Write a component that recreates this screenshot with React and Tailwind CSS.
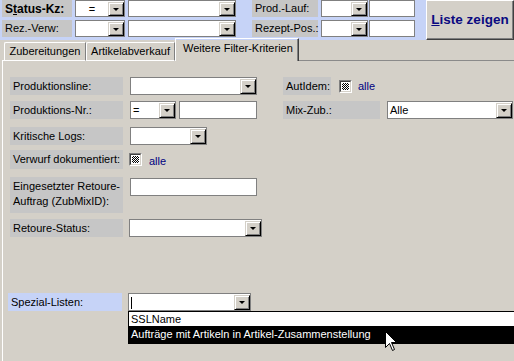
import React from "react";

function DropBtn() {
  return (
    <div className="w-[16px] h-full shrink-0 bg-[#d4d0c8] border border-t-[#d4d0c8] border-l-[#d4d0c8] border-b-black border-r-black shadow-[inset_1px_1px_0_#fff,inset_-1px_-1px_0_#808080] flex items-center justify-center">
      <div className="w-0 h-0 border-l-[3px] border-r-[3px] border-t-[3px] border-l-transparent border-r-transparent border-t-black" />
    </div>
  );
}

function Combo({ className = "", value = "", center = false, caret = false }) {
  return (
    <div className={"flex bg-white border border-[#808080] pt-[1px] " + className}>
      <div className={"flex-1 flex items-center px-[2px] leading-none overflow-hidden whitespace-nowrap " + (center ? "justify-center" : "")}>
        {caret ? <div className="w-[1px] h-[12px] bg-black" /> : value}
      </div>
      <DropBtn />
    </div>
  );
}

function TextBox({ className = "" }) {
  return <div className={"bg-white border border-[#808080] " + className} />;
}

function Label({ className = "", children }) {
  return (
    <div className={"bg-[#c6c6c6] px-[3px] flex " + className}>
      {children}
    </div>
  );
}

function Check() {
  return (
    <div className="w-[13px] h-[13px] border border-t-[#808080] border-l-[#808080] border-b-white border-r-white">
      <div className="w-full h-full border border-t-[#404040] border-l-[#404040] border-b-[#d4d0c8] border-r-[#d4d0c8] p-[1px] bg-white">
        <div className="w-full h-full bg-[repeating-conic-gradient(#000_0_25%,#fff_0_50%)] bg-[length:2px_2px]" />
      </div>
    </div>
  );
}

const L = "items-center whitespace-nowrap";

export default function App() {
  return (
    <div className="relative w-[514px] h-[361px] overflow-hidden bg-[#d4d0c8] font-['Liberation_Sans',Arial,sans-serif] text-[11px] text-black">
      {/* Header band */}
      <div className="flex h-[40px] bg-[#c6d3f7]">
        <div className="flex flex-col gap-[3px] pl-[2px]">
          <div className="flex h-[17px]">
            <Label className={"w-[70px] h-[17px] font-bold text-[12px] " + L}>
              S<span className="underline">t</span>atus-Kz:
            </Label>
            <Combo className="ml-[3px] w-[50px] h-[17px]" value="=" center />
            <Combo className="ml-[3px] w-[108px] h-[17px]" />
            <Label className={"ml-[16px] w-[66px] h-[17px] " + L}>Prod.-Lauf:</Label>
            <Combo className="ml-[3px] w-[47px] h-[17px]" />
            <TextBox className="ml-[1px] w-[46px] h-[17px]" />
          </div>
          <div className="flex h-[17px]">
            <Label className={"w-[70px] h-[17px] " + L}>Rez.-Verw:</Label>
            <Combo className="ml-[3px] w-[50px] h-[17px]" />
            <Combo className="ml-[3px] w-[108px] h-[17px]" />
            <Label className={"ml-[16px] w-[66px] h-[17px] " + L}>Rezept-Pos.:</Label>
            <Combo className="ml-[3px] w-[47px] h-[17px]" />
            <TextBox className="ml-[1px] w-[46px] h-[17px]" />
          </div>
        </div>
        <button className="ml-[11px] w-[88px] h-[40px] bg-[#d4d0c8] border border-t-white border-l-white border-b-[#404040] border-r-[#404040] shadow-[inset_-1px_-1px_0_#808080] text-[13.5px] font-bold text-[#0a0a80] flex items-center justify-center pt-[1px]">
          <span className="underline">L</span>iste zeigen
        </button>
      </div>

      {/* Tabs */}
      <div className="flex items-end h-[21px] pl-[2px]">
        <div className="w-[2px] h-[1px] bg-white" />
        <div className="w-[82px] h-[19px] border border-b-white border-t-white border-l-white border-r-[#808080] rounded-tl-[2px] flex items-center justify-center">
          Zubereitungen
        </div>
        <div className="w-[89px] h-[19px] border border-b-white border-t-white border-l-white border-r-[#808080] rounded-tl-[2px] flex items-center justify-center">
          Artikelabverkauf
        </div>
        <div className="w-[124px] h-[23px] border border-b-0 border-t-white border-l-white border-r-[#404040] shadow-[inset_-1px_0_0_#808080] pl-[7px] pb-[3px] flex items-center whitespace-nowrap">
          Weitere Filter-Kriterien
        </div>
        <div className="flex-1 h-[1px] bg-[#8a8a8a]" />
      </div>

      {/* Panel */}
      <div className="ml-[2px] border-l border-l-white h-[300px] pl-[7px] pt-[16px]">
        <div className="flex">
          <div className="flex flex-col w-[252px]">
            <div className="flex h-[18px]">
              <Label className={"w-[113px] h-[18px] " + L}>Produktionsline:</Label>
              <Combo className="ml-[7px] w-[127px] h-[18px]" />
            </div>
            <div className="flex h-[18px] mt-[6px]">
              <Label className={"w-[113px] h-[18px] " + L}>Produktions-Nr.:</Label>
              <Combo className="ml-[7px] w-[46px] h-[18px]" value="=" />
              <TextBox className="ml-[3px] w-[78px] h-[18px]" />
            </div>
            <div className="flex h-[18px] mt-[8px]">
              <Label className={"w-[113px] h-[18px] " + L}>Kritische Logs:</Label>
              <Combo className="ml-[7px] w-[77px] h-[18px]" />
            </div>
            <div className="flex h-[19px] mt-[5px] items-center">
              <Label className={"w-[113px] h-[19px] " + L}>Verwurf dokumentiert:</Label>
              <div className="ml-[6px]"><Check /></div>
              <span className="ml-[7px] mt-[3px] text-[#000080]">alle</span>
            </div>
            <div className="flex mt-[8px]">
              <Label className="w-[113px] h-[36px] items-start pt-[2px] leading-[15px]">
                Eingesetzter Retoure-Auftrag (ZubMixID):
              </Label>
              <TextBox className="ml-[7px] mt-[1px] w-[127px] h-[18px]" />
            </div>
            <div className="flex h-[18px] mt-[6px]">
              <Label className={"w-[113px] h-[18px] " + L}>Retoure-Status:</Label>
              <Combo className="ml-[6px] w-[133px] h-[18px]" />
            </div>
          </div>
          <div className="flex flex-col ml-[21px]">
            <div className="flex h-[18px] items-center">
              <Label className={"w-[48px] h-[18px] " + L}>AutIdem:</Label>
              <div className="ml-[8px]"><Check /></div>
              <span className="ml-[6px] text-[#000080]">alle</span>
            </div>
            <div className="flex h-[18px] mt-[6px]">
              <Label className={"w-[97px] h-[18px] " + L}>Mix-Zub.:</Label>
              <Combo className="ml-[7px] w-[126px] h-[18px]" value="Alle" />
            </div>
          </div>
        </div>

        <div className="flex h-[18px] mt-[56px] -ml-[2px]">
          <div className="w-[114px] h-[18px] bg-[#c6d3f7] px-[3px] flex items-center">Spezial-Listen:</div>
          <div className="relative ml-[6px]">
            <Combo className="w-[123px] h-[18px]" caret />
            <div className="absolute left-0 top-full w-[400px] bg-white border border-black z-10">
              <div className="h-[14px] flex items-center px-[2px]">SSLName</div>
              <div className="h-[17px] flex items-center px-[2px] bg-black text-white">
                Aufträge mit Artikeln in Artikel-Zusammenstellung
              </div>
            </div>
          </div>
        </div>
      </div>

      {/* Mouse cursor */}
      <svg className="absolute left-[385px] top-[331px] z-20" width="13" height="21" viewBox="0 0 13 21">
        <path d="M0.5 0.5 L0.5 16.5 L4.5 12.5 L7.5 19.5 L9.5 18.5 L6.5 11.5 L11.5 11.5 Z" fill="#fff" stroke="#000" strokeWidth="1" />
      </svg>
    </div>
  );
}
